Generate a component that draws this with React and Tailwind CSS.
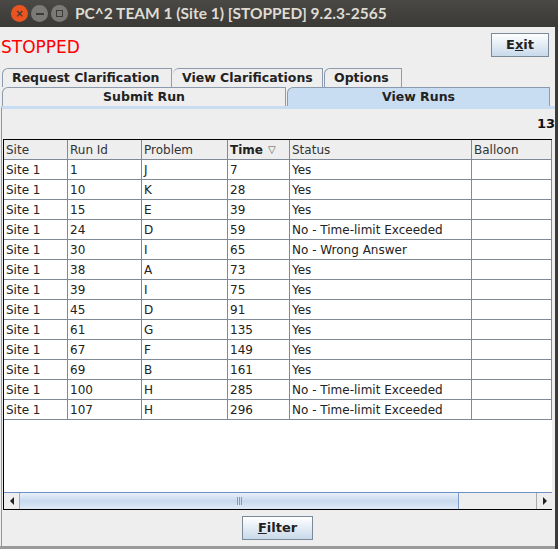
import React from "react";

const rows = [
  ["Site 1", "1", "J", "7", "Yes"],
  ["Site 1", "10", "K", "28", "Yes"],
  ["Site 1", "15", "E", "39", "Yes"],
  ["Site 1", "24", "D", "59", "No - Time-limit Exceeded"],
  ["Site 1", "30", "I", "65", "No - Wrong Answer"],
  ["Site 1", "38", "A", "73", "Yes"],
  ["Site 1", "39", "I", "75", "Yes"],
  ["Site 1", "45", "D", "91", "Yes"],
  ["Site 1", "61", "G", "135", "Yes"],
  ["Site 1", "67", "F", "149", "Yes"],
  ["Site 1", "69", "B", "161", "Yes"],
  ["Site 1", "100", "H", "285", "No - Time-limit Exceeded"],
  ["Site 1", "107", "H", "296", "No - Time-limit Exceeded"],
];

const widths = ["w-[64px]", "w-[74px]", "w-[86px]", "w-[62px]", "w-[182px]", "w-[80px]"];

export default function App() {
  return (
    <div className="w-[558px] h-[549px] bg-[#3c3b37] flex flex-col overflow-hidden" style={{ fontFamily: '"DejaVu Sans", sans-serif' }}>
      {/* title bar */}
      <div className="h-[27px] flex items-center bg-gradient-to-b from-[#4a4945] to-[#3a3935]">
        <div className="flex items-center gap-[2px] pl-[11px]">
          <div className="w-[17px] h-[17px] rounded-full bg-[#e95420] flex items-center justify-center text-[#3c3b37] text-[10px] font-bold leading-none">×</div>
          <div className="w-[17px] h-[17px] rounded-full bg-[#7b7a76] flex items-center justify-center ml-[1px]">
            <div className="w-[8px] h-[2px] bg-[#3c3b37]" />
          </div>
          <div className="w-[17px] h-[17px] rounded-full bg-[#7b7a76] flex items-center justify-center ml-[1px]">
            <div className="w-[7px] h-[7px] border border-[#3c3b37]" />
          </div>
        </div>
        <div className="ml-[7px] text-[#dfdbd2] text-[15.5px] font-bold" style={{ fontFamily: 'Lato, sans-serif' }}>PC^2 TEAM 1 (Site 1) [STOPPED] 9.2.3-2565</div>
      </div>

      {/* body */}
      <div className="flex-1 bg-[#eeeeee] flex flex-col mr-[3px] border-b-[3px] border-[#9a9a9a] relative">
        {/* top row */}
        <div className="h-[41px] flex items-start justify-between pl-[1px] pr-[6px]">
          <div className="text-[#ff0000] text-[17px] mt-[12px] leading-none">STOPPED</div>
          <button className="mt-[6px] w-[58px] h-[24px] border border-[#7a8a99] bg-gradient-to-b from-[#ffffff] to-[#c8d9ea] text-[13px] font-bold text-[#222] flex items-center justify-center">
            <span>E<span className="underline">x</span>it</span>
          </button>
        </div>

        {/* tabs row 1 */}
        <div className="h-[19px] flex items-end pl-[2px] text-[12.5px] font-bold text-[#222]">
          <div className="h-[19px] w-[170px] border border-b-0 border-[#8c9bad] [border-top-left-radius:6px] flex items-center pl-[9px]">Request Clarification</div>
          <div className="h-[19px] w-[150px] border border-b-0 border-l-0 border-[#8c9bad] [border-top-left-radius:6px] flex items-center pl-[9px] ml-[1px]">View Clarifications</div>
          <div className="h-[19px] w-[78px] border border-b-0 border-[#8c9bad] [border-top-left-radius:6px] flex items-center pl-[9px] ml-[1px]">Options</div>
        </div>
        {/* tabs row 2 */}
        <div className="h-[19px] flex pl-[2px] text-[12.5px] font-bold text-[#222]">
          <div className="h-[19px] w-[284px] border border-b-0 border-[#8c9bad] [border-top-left-radius:6px] flex items-center justify-center">Submit Run</div>
          <div className="h-[19px] w-[263px] border border-b-0 border-[#8c9bad] [border-top-left-radius:6px] bg-[#c8ddf2] flex items-center justify-center ml-[1px]">View Runs</div>
        </div>

        {/* content panel */}
        <div className="flex-1 flex flex-col border-l border-t-[3px] border-t-[#c8ddf2] border-l-[#7a9cc7] ml-[1px]">
          <div className="h-[30px] flex items-center justify-end text-[13px] font-bold text-[#111]">13</div>
          {/* table */}
          <div className="h-[370px] ml-[1px] mr-[3px] border-t border-l border-black bg-white flex flex-col overflow-hidden">
            <div className="flex h-[20px] text-[12px] text-[#333] bg-[#eeeeee] border-b border-[#808a96]">
              {["Site", "Run Id", "Problem", "Time", "Status", "Balloon"].map((h, i) => (
                <div key={h} className={`${widths[i]} shrink-0 border-r border-[#808a96] flex items-center pl-[2px] ${i === 3 ? "font-bold text-[#222]" : ""}`}>
                  {h}
                  {i === 3 && <span className="ml-[5px] text-[10px] font-normal text-[#555]">▽</span>}
                </div>
              ))}
            </div>
            {rows.map((r, ri) => (
              <div key={ri} className="flex h-[20px] text-[12px] text-[#222] border-b border-[#808a96]">
                {[...r, ""].map((c, i) => (
                  <div key={i} className={`${widths[i]} shrink-0 border-r border-[#808a96] flex items-center pl-[2px]`}>{c}</div>
                ))}
              </div>
            ))}
            <div className="flex-1" />
            {/* scrollbar */}
            <div className="h-[17px] flex border-t border-[#6f8fc9] bg-[#eeeeee] shrink-0">
              <div className="w-[16px] flex items-center justify-center border-r border-[#aaa] bg-[#eeeeee]">
                <div className="w-0 h-0 border-y-[4px] border-y-transparent border-r-[4px] border-r-[#222]" />
              </div>
              <div className="w-[439px] bg-gradient-to-b from-[#e9f0f8] via-[#c8d9ee] to-[#e0eaf5] border-r border-[#7a9cc7] flex items-center justify-center">
                <div className="flex gap-[1px]">
                  <div className="w-[1px] h-[8px] bg-[#7a9cc7]" />
                  <div className="w-[1px] h-[8px] bg-[#7a9cc7]" />
                  <div className="w-[1px] h-[8px] bg-[#7a9cc7]" />
                </div>
              </div>
              <div className="flex-1" />
              <div className="w-[16px] flex items-center justify-center border-l border-[#aaa]">
                <div className="w-0 h-0 border-y-[4px] border-y-transparent border-l-[4px] border-l-[#222]" />
              </div>
            </div>
          </div>
          <div className="border-t border-black ml-[1px] mr-[3px]" />
          {/* filter */}
          <div className="flex-1 flex items-center justify-center pr-[2px]">
            <button className="w-[71px] h-[24px] border border-[#7a8a99] bg-gradient-to-b from-[#ffffff] to-[#c8d9ea] text-[13px] font-bold text-[#222] flex items-center justify-center">
              <span><span className="underline">F</span>ilter</span>
            </button>
          </div>
        </div>
      </div>
    </div>
  );
}
